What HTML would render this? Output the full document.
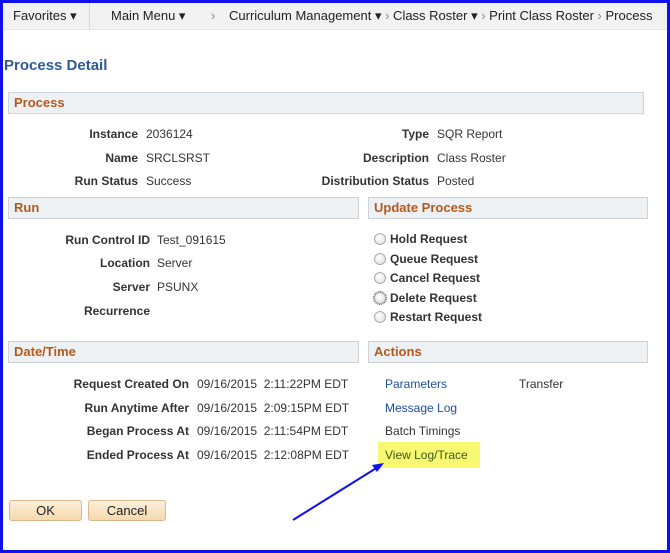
<!DOCTYPE html>
<html><head><style>
body{margin:0;width:670px;height:553px;overflow:hidden;font-family:"Liberation Sans",Arial,sans-serif;font-size:12px;color:#333;position:relative;background:#fff}
.frame{position:absolute;left:0;top:0;width:664px;height:547px;border:3px solid #1010ee;z-index:5;pointer-events:none}
.nav{position:absolute;left:3px;top:3px;width:664px;height:26px;background:#f2f2f2;border-bottom:1px solid #e4e4e4}
.nav span{position:absolute;top:5px;font-size:13px;color:#222}
.a{position:absolute;white-space:nowrap}
.h{position:absolute;background:#eef1f3;border:1px solid #cdd3d8;color:#b55a1a;font-weight:bold;font-size:13px;padding-left:5px;line-height:20px;box-sizing:border-box;height:22px}
.l{position:absolute;font-weight:bold;text-align:right;white-space:nowrap}
.r{position:absolute;width:10px;height:10px;border-radius:50%;border:1px solid #aaa;background:radial-gradient(circle at 40% 35%,#fff,#ddd)}
.lnk{color:#1a4f9c}
.btn{position:absolute;height:19px;border:1px solid #d9b88a;border-radius:3px;background:linear-gradient(#fdf0dc,#f5d9ae);text-align:center;line-height:19px;font-size:13px;color:#222}
</style></head><body>
<div class="frame"></div>
<div class="nav">
<span style="left:10px">Favorites ▾</span>
<span style="left:86px;top:0;width:1px;height:26px;background:#d8d8d8"></span>
<span style="left:108px">Main Menu ▾</span>
<span style="left:208px;color:#888">›</span>
<span style="left:226px">Curriculum Management ▾ <span style="position:static;color:#888">›</span> Class Roster ▾ <span style="position:static;color:#888">›</span> Print Class Roster <span style="position:static;color:#888">›</span> Process</span>
</div>
<div class="a" style="left:4px;top:57px;font-size:15px;font-weight:bold;color:#2f5a97">Process Detail</div>
<div class="h" style="left:8px;top:92px;width:636px">Process</div>
<div class="l" style="right:532px;top:127px">Instance</div><div class="a" style="left:146px;top:127px">2036124</div>
<div class="l" style="right:532px;top:151px">Name</div><div class="a" style="left:146px;top:151px">SRCLSRST</div>
<div class="l" style="right:532px;top:174px">Run Status</div><div class="a" style="left:146px;top:174px">Success</div>
<div class="l" style="right:241px;top:127px">Type</div><div class="a" style="left:437px;top:127px">SQR Report</div>
<div class="l" style="right:241px;top:151px">Description</div><div class="a" style="left:437px;top:151px">Class Roster</div>
<div class="l" style="right:241px;top:174px">Distribution Status</div><div class="a" style="left:437px;top:174px">Posted</div>
<div class="h" style="left:8px;top:197px;width:351px">Run</div>
<div class="h" style="left:368px;top:197px;width:280px">Update Process</div>
<div class="l" style="right:520px;top:233px">Run Control ID</div><div class="a" style="left:157px;top:233px">Test_091615</div>
<div class="l" style="right:520px;top:256px">Location</div><div class="a" style="left:157px;top:256px">Server</div>
<div class="l" style="right:520px;top:280px">Server</div><div class="a" style="left:157px;top:280px">PSUNX</div>
<div class="l" style="right:520px;top:304px">Recurrence</div>
<div class="r" style="left:374px;top:233px"></div><div class="l" style="left:390px;top:232px">Hold Request</div>
<div class="r" style="left:374px;top:253px"></div><div class="l" style="left:390px;top:252px">Queue Request</div>
<div class="r" style="left:374px;top:272px"></div><div class="l" style="left:390px;top:271px">Cancel Request</div>
<div class="r" style="left:374px;top:292px;outline:1px dotted #555"></div><div class="l" style="left:390px;top:291px">Delete Request</div>
<div class="r" style="left:374px;top:311px"></div><div class="l" style="left:390px;top:310px">Restart Request</div>
<div class="h" style="left:8px;top:341px;width:351px">Date/Time</div>
<div class="h" style="left:368px;top:341px;width:280px">Actions</div>
<div class="l" style="right:481px;top:377px">Request Created On</div><div class="a" style="left:197px;top:377px">09/16/2015&nbsp; 2:11:22PM EDT</div>
<div class="l" style="right:481px;top:401px">Run Anytime After</div><div class="a" style="left:197px;top:401px">09/16/2015&nbsp; 2:09:15PM EDT</div>
<div class="l" style="right:481px;top:424px">Began Process At</div><div class="a" style="left:197px;top:424px">09/16/2015&nbsp; 2:11:54PM EDT</div>
<div class="l" style="right:481px;top:448px">Ended Process At</div><div class="a" style="left:197px;top:448px">09/16/2015&nbsp; 2:12:08PM EDT</div>
<div class="a lnk" style="left:385px;top:377px">Parameters</div><div class="a" style="left:519px;top:377px">Transfer</div>
<div class="a lnk" style="left:385px;top:401px">Message Log</div>
<div class="a" style="left:385px;top:424px">Batch Timings</div>
<div class="a" style="left:378px;top:442px;width:102px;height:26px;background:#f9f871"></div>
<div class="a" style="left:385px;top:448px;color:#3a5a1a">View Log/Trace</div>
<div class="btn" style="left:9px;top:500px;width:71px">OK</div>
<div class="btn" style="left:88px;top:500px;width:76px">Cancel</div>
<svg style="position:absolute;left:0;top:0" width="670" height="553"><line x1="293" y1="520" x2="378" y2="467" stroke="#1010ee" stroke-width="2"/><polygon points="384,463 372,465 377,472" fill="#1010ee"/></svg>
</body></html>
